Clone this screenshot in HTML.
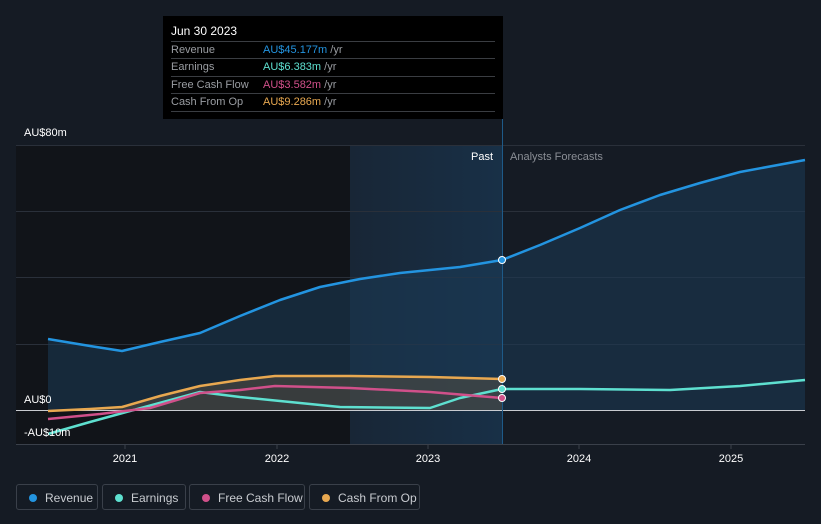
<!DOCTYPE html><html><head><style>
body{margin:0;background:#151b24;font-family:"Liberation Sans",sans-serif;}
.w{position:relative;width:821px;height:524px;overflow:hidden;background:#151b24}
.tt{position:absolute;left:163px;top:16px;width:340px;height:103px;background:#000;color:#fff;font-size:11px}
.tt .r{position:absolute;left:8px;width:324px;border-top:1px solid #3a3d42;height:17px;line-height:17px}
.tt .l{color:#9a9da2;position:absolute;left:0}
.tt .v{position:absolute;left:92px}
.tt .u{color:#9a9da2}
.lg{position:absolute;top:484px;height:26px;border:1px solid #3a404a;border-radius:3px;color:#c8cbd0;font-size:12px;line-height:26px;box-sizing:border-box}
.lg i{position:absolute;left:12px;top:9px;width:8px;height:8px;border-radius:50%}
.lg span{position:absolute;left:28px}
</style></head><body><div class="w">
<svg width="821" height="524" style="position:absolute;left:0;top:0" font-family="Liberation Sans" font-size="11">
<defs><linearGradient id="hb" x1="0" x2="1"><stop offset="0" stop-color="#182636"/><stop offset="1" stop-color="#183047"/></linearGradient></defs>
<rect x="16" y="145" width="334" height="299" fill="#111419"/>
<rect x="350" y="145" width="152" height="299" fill="url(#hb)"/>
<g stroke="#2a303a" stroke-width="1"><line x1="16" x2="805" y1="145.5" y2="145.5"/><line x1="16" x2="805" y1="211.5" y2="211.5"/><line x1="16" x2="805" y1="277.5" y2="277.5"/><line x1="16" x2="805" y1="344.5" y2="344.5"/></g>
<path d="M48,339 L90,346 L122,351 L160,342 L200,333 L240,316 L280,300 L320,287 L360,279 L400,273 L430,270 L460,267 L502,260 L540,245 L580,228 L620,210 L660,195 L700,183 L740,172 L805,160 L805,410 L48,410Z" fill="#1c3a55" opacity="0.55"/>
<path d="M48,411 L90,409 L122,407 L160,396 L200,386 L240,380 L275,376 L350,376 L430,377 L502,379 L502,410 L48,410Z" fill="#5a5040" opacity="0.5"/>
<line x1="16" x2="805" y1="410.5" y2="410.5" stroke="#c8cbd0" stroke-width="1"/>
<line x1="16" x2="805" y1="444.5" y2="444.5" stroke="#3a404a"/>
<line x1="502.5" x2="502.5" y1="119" y2="444" stroke="#1e5a88"/>
<g fill="none" stroke-width="2.5" stroke-linejoin="round">
<path d="M48,339 L90,346 L122,351 L160,342 L200,333 L240,316 L280,300 L320,287 L360,279 L400,273 L430,270 L460,267 L502,260 L540,245 L580,228 L620,210 L660,195 L700,183 L740,172 L805,160" stroke="#2394e0"/>
<path d="M48,434 L90,422 L130,411 L200,392 L240,397 L280,401 L340,407 L430,408 L460,398 L502,389 L580,389 L670,390 L740,386 L805,380" stroke="#5ee0d0"/>
<path d="M48,419 L100,414 L150,408 L200,393 L240,390 L275,386 L350,388 L430,392 L502,398" stroke="#d0508a"/>
<path d="M48,411 L90,409 L122,407 L160,396 L200,386 L240,380 L275,376 L350,376 L430,377 L502,379" stroke="#e8a850"/>
</g>
<circle cx="502" cy="260" r="3.5" fill="#2394e0" stroke="#fff"/>
<circle cx="502" cy="389" r="3.5" fill="#5ee0d0" stroke="#fff"/>
<circle cx="502" cy="398" r="3.5" fill="#d0508a" stroke="#fff"/>
<circle cx="502" cy="379" r="3.5" fill="#e8a850" stroke="#fff"/>
<text x="24" y="136" fill="#fff">AU$80m</text>
<text x="24" y="403" fill="#fff">AU$0</text>
<text x="24" y="436" fill="#fff">-AU$10m</text>
<text x="493" y="160" fill="#fff" text-anchor="end">Past</text>
<text x="510" y="160" fill="#8a8e95">Analysts Forecasts</text>
<g fill="#fff" text-anchor="middle"><text x="125" y="462">2021</text><text x="277" y="462">2022</text><text x="428" y="462">2023</text><text x="579" y="462">2024</text><text x="731" y="462">2025</text></g>
<g stroke="#3a404a"><line x1="125" x2="125" y1="444" y2="449"/><line x1="277" x2="277" y1="444" y2="449"/><line x1="428" x2="428" y1="444" y2="449"/><line x1="579" x2="579" y1="444" y2="449"/><line x1="731" x2="731" y1="444" y2="449"/></g>
</svg>
<div class="tt">
<div style="position:absolute;left:8px;top:8px;font-size:12px">Jun 30 2023</div>
<div class="r" style="top:25px"><span class="l">Revenue</span><span class="v"><b style="font-weight:normal;color:#2394e0">AU$45.177m</b> <span class="u">/yr</span></span></div>
<div class="r" style="top:42px"><span class="l">Earnings</span><span class="v"><b style="font-weight:normal;color:#5ee0d0">AU$6.383m</b> <span class="u">/yr</span></span></div>
<div class="r" style="top:60px"><span class="l">Free Cash Flow</span><span class="v"><b style="font-weight:normal;color:#d0508a">AU$3.582m</b> <span class="u">/yr</span></span></div>
<div class="r" style="top:77px"><span class="l">Cash From Op</span><span class="v"><b style="font-weight:normal;color:#e8a850">AU$9.286m</b> <span class="u">/yr</span></span></div>
<div class="r" style="top:95px;height:0"></div>
</div>
<div class="lg" style="left:16px;width:82px"><i style="background:#2394e0"></i><span>Revenue</span></div>
<div class="lg" style="left:102px;width:84px"><i style="background:#5ee0d0"></i><span>Earnings</span></div>
<div class="lg" style="left:189px;width:116px"><i style="background:#d0508a"></i><span>Free Cash Flow</span></div>
<div class="lg" style="left:309px;width:111px"><i style="background:#e8a850"></i><span>Cash From Op</span></div>
</div></body></html>
